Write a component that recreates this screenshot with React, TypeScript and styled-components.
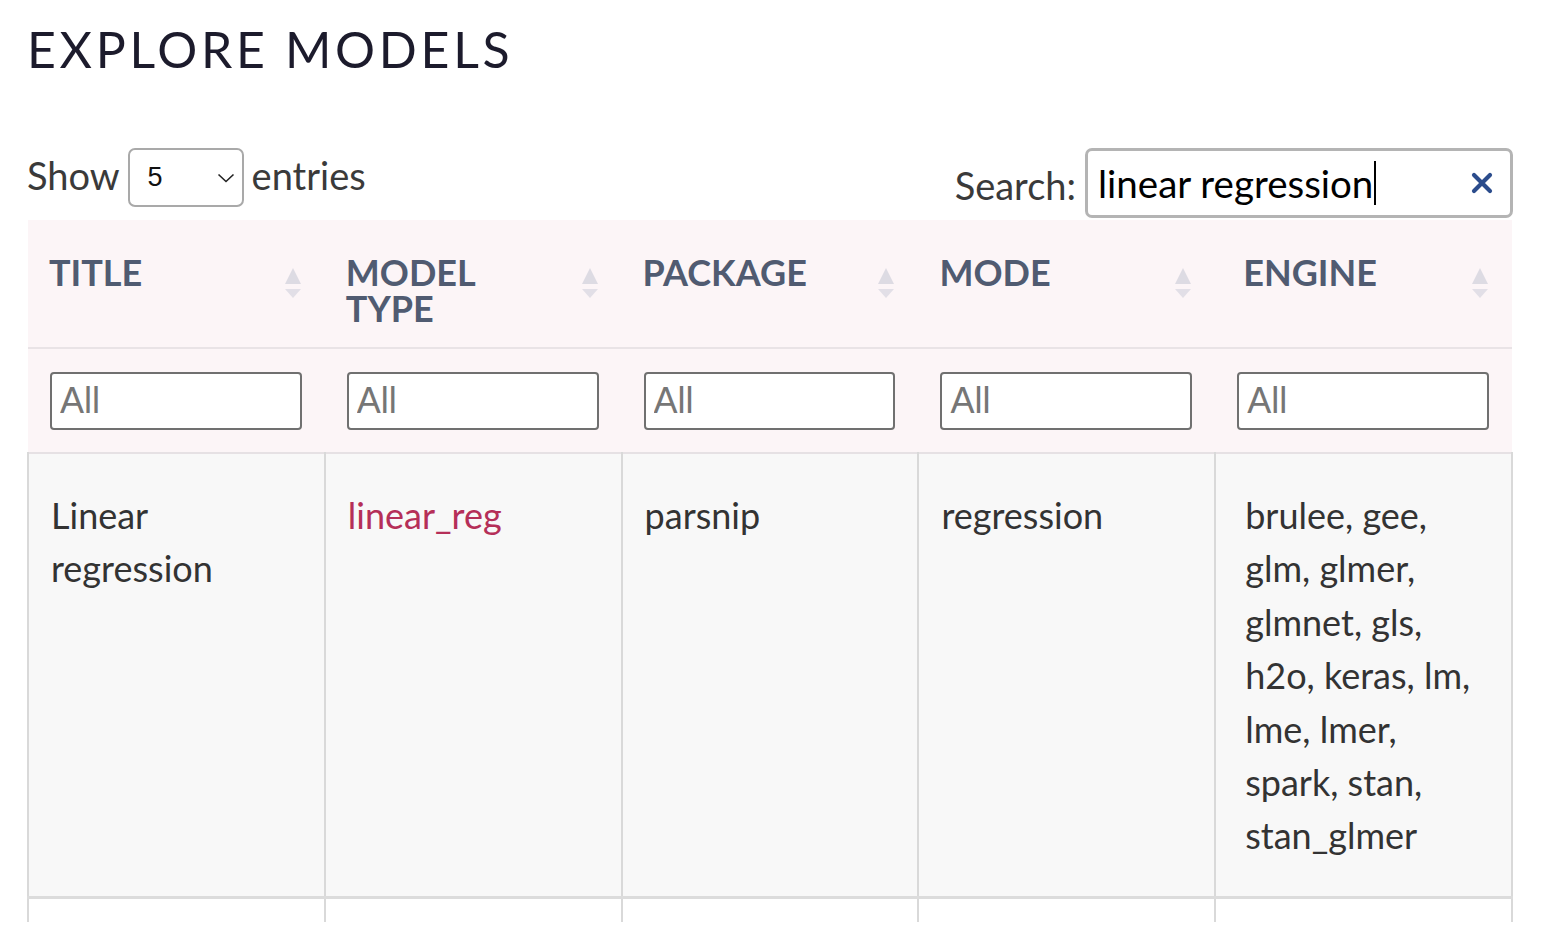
import styled, { createGlobalStyle } from "styled-components";

const GlobalStyle = createGlobalStyle`
  body {
    margin: 0;
    background: #ffffff;
    font-family: Lato, "Noto Sans", sans-serif;
  }
`;

const columns = ["TITLE", "MODEL TYPE", "PACKAGE", "MODE", "ENGINE"];

const rows = [
  {
    title: "Linear regression",
    model: "linear_reg",
    pkg: "parsnip",
    mode: "regression",
    engine:
      "brulee, gee, glm, glmer, glmnet, gls, h2o, keras, lm, lme, lmer, spark, stan, stan_glmer",
  },
];

function App() {
  return (
    <Page>
      <GlobalStyle />
      <Heading>EXPLORE MODELS</Heading>
      <Controls>
        <LengthGroup>
          <Label>Show</Label>
          <SelectBox>
            <SelectValue>5</SelectValue>
            <svg width="18" height="10" viewBox="0 0 18 10">
              <path d="M1.5 1.5 L9 8.5 L16.5 1.5" fill="none" stroke="#222" strokeWidth="1.6" />
            </svg>
          </SelectBox>
          <Label>entries</Label>
        </LengthGroup>
        <SearchGroup>
          <SearchLabel>Search:</SearchLabel>
          <SearchBox>
            <SearchText>
              linear regression
              <Caret />
            </SearchText>
            <ClearButton>
              <svg width="22" height="22" viewBox="0 0 22 22">
                <path d="M3 3 L19 19 M19 3 L3 19" stroke="#2b4c8c" strokeWidth="4.2" strokeLinecap="round" />
              </svg>
            </ClearButton>
          </SearchBox>
        </SearchGroup>
      </Controls>
      <TableClip>
        <Table>
          <colgroup>
            {columns.map((c) => (
              <col key={c} />
            ))}
          </colgroup>
          <thead>
            <HeadRow>
              {columns.map((c) => (
                <Th key={c}>
                  <HeadInner>
                    <HeadLabel>{c}</HeadLabel>
                    <SortIcon>
                      <SortUp />
                      <SortDown />
                    </SortIcon>
                  </HeadInner>
                </Th>
              ))}
            </HeadRow>
            <FilterRow>
              {columns.map((c) => (
                <FilterCell key={c}>
                  <FilterInput placeholder="All" />
                </FilterCell>
              ))}
            </FilterRow>
          </thead>
          <tbody>
            {rows.map((r) => (
              <BodyRow key={r.model}>
                <Td>{r.title}</Td>
                <Td>
                  <ModelLink href="#">{r.model}</ModelLink>
                </Td>
                <Td>{r.pkg}</Td>
                <Td>{r.mode}</Td>
                <Td>{r.engine}</Td>
              </BodyRow>
            ))}
            <BlankRow>
              {columns.map((c) => (
                <BlankCell key={c} />
              ))}
            </BlankRow>
          </tbody>
        </Table>
      </TableClip>
    </Page>
  );
}

const Page = styled.div`
  width: 1486px;
  padding: 24px 0 0 27px;
`;

const Heading = styled.h1`
  margin: 0;
  font-family: Lato, sans-serif;
  font-weight: 400;
  font-size: 50px;
  line-height: 50px;
  letter-spacing: 3.7px;
  color: #1c1b2c;
`;

const Controls = styled.div`
  display: flex;
  justify-content: space-between;
  align-items: flex-start;
  margin-top: 74px;
`;

const LengthGroup = styled.div`
  display: flex;
  align-items: center;
  gap: 8px;
  height: 59px;
`;

const SearchGroup = styled.div`
  display: flex;
  align-items: center;
  gap: 9px;
  height: 70px;
`;

const Label = styled.span`
  font-size: 38px;
  color: #3a3a3a;
  line-height: 1;
  padding-bottom: 6px;
`;

const SearchLabel = styled(Label)`
  padding-bottom: 0;
  padding-top: 4px;
`;

const SelectBox = styled.div`
  box-sizing: border-box;
  width: 116px;
  height: 59px;
  border: 2px solid #a9a9a9;
  border-radius: 7px;
  display: flex;
  align-items: center;
  justify-content: space-between;
  padding: 0 7px 0 18px;
  background: #fff;
`;

const SelectValue = styled.span`
  font-family: "Liberation Sans", Arial, sans-serif;
  font-size: 27px;
  color: #111;
`;

const SearchBox = styled.div`
  box-sizing: border-box;
  width: 428px;
  height: 70px;
  border: 3px solid #b4b4b4;
  border-radius: 7px;
  display: flex;
  align-items: center;
  justify-content: space-between;
  padding: 0 17px 0 10px;
  background: #fff;
`;

const SearchText = styled.span`
  display: flex;
  align-items: center;
  font-size: 38.5px;
  color: #000;
  white-space: pre;
`;

const Caret = styled.span`
  display: inline-block;
  width: 2px;
  height: 44px;
  background: #000;
  margin-left: 1px;
`;

const ClearButton = styled.span`
  display: flex;
  align-items: center;
`;

const TableClip = styled.div`
  margin-top: 2px;
  height: 702px;
  overflow: hidden;
`;

const Table = styled.table`
  width: 1486px;
  table-layout: fixed;
  border-collapse: collapse;

  col {
    width: 20%;
  }
`;

const HeadRow = styled.tr`
  background: #fcf5f7;
  border-bottom: 2px solid #e9e3e6;
`;

const Th = styled.th`
  padding: 34px 24px 21px 21px;
  vertical-align: top;
  text-align: left;

  &:last-child {
    padding-left: 28px;
  }
`;

const HeadInner = styled.div`
  display: flex;
  justify-content: space-between;
  align-items: flex-start;
`;

const HeadLabel = styled.span`
  font-size: 36px;
  line-height: 36px;
  font-weight: 700;
  color: #505b71;
  width: 150px;
`;

const SortIcon = styled.span`
  display: flex;
  flex-direction: column;
  align-items: center;
  gap: 5px;
  margin-top: 14px;
`;

const SortUp = styled.span`
  width: 0;
  height: 0;
  border-left: 8px solid transparent;
  border-right: 8px solid transparent;
  border-bottom: 16px solid #dddbe3;
`;

const SortDown = styled.span`
  width: 0;
  height: 0;
  border-left: 8px solid transparent;
  border-right: 8px solid transparent;
  border-top: 9px solid #e2dfe7;
`;

const FilterRow = styled.tr`
  background: #fcf5f7;
  border-bottom: 2px solid #e6e1e4;
`;

const FilterCell = styled.td`
  padding: 23px 23px 22px 22px;
`;

const FilterInput = styled.input`
  box-sizing: border-box;
  width: 100%;
  height: 58px;
  border: 2px solid #707070;
  border-radius: 4px;
  padding: 0 8px;
  font-family: "Liberation Sans", Arial, sans-serif;
  font-size: 36px;
  color: #333;
  background: #fff;
  outline: none;

  &::placeholder {
    color: #767676;
  }
`;

const BodyRow = styled.tr`
  background: #f8f8f8;
  border-bottom: 3px solid #dcdcdc;
`;

const Td = styled.td`
  padding: 35px 36px 33px 22px;
  vertical-align: top;
  border-left: 2px solid #d9d9d9;
  border-right: 2px solid #d9d9d9;
  font-size: 36px;
  line-height: 53.4px;
  color: #333;

  &:last-child {
    padding-left: 29px;
  }
`;

const ModelLink = styled.a`
  color: #b52f58;
  text-decoration: none;
`;

const BlankRow = styled.tr`
  background: #fff;
`;

const BlankCell = styled.td`
  height: 60px;
  border-left: 2px solid #d9d9d9;
  border-right: 2px solid #d9d9d9;
`;

export default App;
